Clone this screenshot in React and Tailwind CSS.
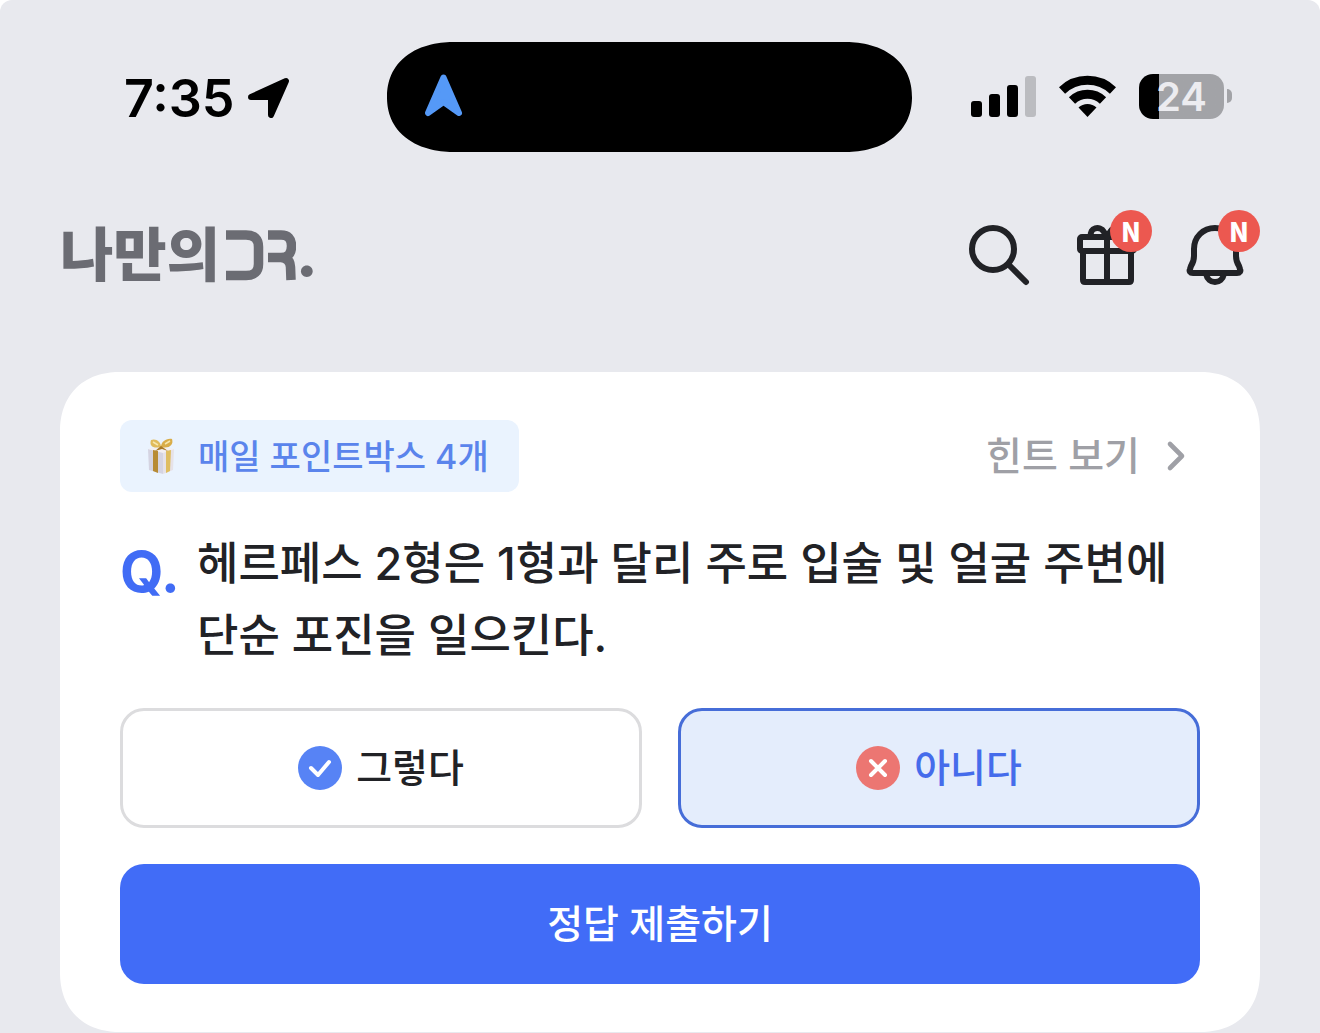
import { useState } from "react";
import { ChevronRight } from "lucide-react";

function StatusBar() {
  return (
    <div className="grid grid-cols-[387px_1fr_408px] items-center">
      <div className="flex items-center gap-3 pt-1 pl-[124px]">
        <span className="text-[52px] leading-[60px] font-semibold text-black">7:35</span>
        <svg width="44" height="44" viewBox="0 0 44 44" aria-hidden="true">
          <path
            d="M4 20L39 4L24 38V20Z"
            fill="black"
            stroke="black"
            strokeWidth="6"
            strokeLinejoin="round"
          />
        </svg>
      </div>

      <div className="flex h-[110px] items-center rounded-[68px/55px] bg-black pl-9 [corner-shape:superellipse(1.15)]">
        <svg width="42" height="46" viewBox="0 0 42 46" aria-hidden="true">
          <path
            d="M20.500 3.500L36 39L20.500 28L5 39Z"
            fill="#5599f7"
            stroke="#5599f7"
            strokeWidth="6"
            strokeLinejoin="round"
          />
        </svg>
      </div>

      <div className="flex items-center justify-end gap-[23px] pr-[88px] pb-0.5">
        <svg width="65" height="42" viewBox="0 0 65 42" aria-hidden="true">
          <rect x="0" y="26" width="11" height="16" rx="3" />
          <rect x="18" y="19" width="11" height="23" rx="3" />
          <rect x="36" y="10" width="11" height="32" rx="3" />
          <rect x="54" y="1" width="11" height="41" rx="3" fill="#bbbcc0" />
        </svg>
        <svg width="57" height="42" viewBox="0 0 57 42" aria-hidden="true">
          <g fill="none" stroke="black" strokeWidth="9">
            <path d="M3 15.500A37 37 0 0 1 54 15.500" />
            <path d="M13 25.500A22.500 22.500 0 0 1 44 25.500" />
          </g>
          <path d="M28.500 42L19.500 32.500A13 13 0 0 1 37.500 32.500Z" />
        </svg>
        <div className="flex items-center gap-[3px]">
          <div className="flex h-[45px] w-[85px] items-center justify-center rounded-[14px] bg-linear-to-r from-black from-[20px] to-[#a2a3a7] to-[20px] text-[40px] leading-[45px] font-semibold text-[#ececf0]">
            24
          </div>
          <div className="h-[14px] w-[5px] rounded-r-full bg-[#a2a3a7]" />
        </div>
      </div>
    </div>
  );
}

function Logo() {
  return (
    <a href="#" className="flex items-center text-[#6b6c73]" aria-label="나만의 DR.">
      <span className="text-[58px] leading-[72px] font-black">나만의</span>
      <svg className="ml-1.5" width="70" height="52" viewBox="0 0 70 52" aria-hidden="true">
        <g fill="none" stroke="currentColor" strokeWidth="9.5">
          <path d="M0 6H20Q32.500 6 32.500 18V35Q32.500 46.500 20 46.500H0" />
          <path d="M42 6H55Q65.500 6 65.500 17Q65.500 28.500 55 28.500H42M55 28.500Q64 29 64.500 38L65 51" />
        </g>
      </svg>
      <span className="text-[58px] leading-[72px] font-black">.</span>
    </a>
  );
}

function IconButton({ label, isNew, children }) {
  return (
    <button type="button" aria-label={label} className="relative size-[72px] text-[#212226]">
      <svg
        className="size-full"
        viewBox="0 0 72 72"
        fill="none"
        stroke="currentColor"
        strokeWidth="6"
        strokeLinecap="round"
        strokeLinejoin="round"
      >
        {children}
      </svg>
      {isNew && (
        <span className="absolute -top-[9px] -right-[9px] flex size-[42px] items-center justify-center rounded-full bg-[#ec5850] font-['Noto_Sans_CJK_KR',sans-serif] text-[26px] leading-none font-black text-white">
          N
        </span>
      )}
    </button>
  );
}

function Header() {
  return (
    <header className="mt-[67px] flex items-center justify-between pr-[69px] pl-[60px]">
      <Logo />
      <div className="flex gap-9">
        <IconButton label="검색">
          <circle cx="30" cy="30" r="21" />
          <path d="M45.500 45.500L63 63" />
        </IconButton>
        <IconButton label="선물" isNew>
          <rect x="9" y="18" width="54" height="14" rx="2" />
          <path d="M12 32V61Q12 63 14 63H58Q60 63 60 61V32M36 18V63" />
          <path d="M20 17C18 9 29 6 33 13L36 17L39 13C43 6 54 9 52 17" />
        </IconButton>
        <IconButton label="알림" isNew>
          <path d="M36 9C24 9 15 18 15 30V37C15 42 14 44 12 47L11 50C10 52 11 54 14 54H58C61 54 62 52 61 50L60 47C58 44 57 42 57 37V30C57 18 48 9 36 9Z" />
          <path d="M27 55C28 60 32 63 36 63S44 60 45 55" />
        </IconButton>
      </div>
    </header>
  );
}

function GiftBox() {
  return (
    <svg width="34" height="40" viewBox="0 0 32 40" aria-hidden="true">
      <path d="M3 13L18 16V38L4 34Z" fill="#d5d4e2" />
      <path d="M18 16L29 13L28 34L18 38Z" fill="#e6e2e8" />
      <path d="M3 13L15 10L29 13L18 17Z" fill="#f3eff1" />
      <path d="M8 14L13 15V37L8 35Z" fill="#b78b35" />
      <path d="M21 15L26 14L25 35L21 37Z" fill="#dfbd60" />
      <path d="M16 11C8 13 4 10 6 4C11 2 16 6 16 11Z" fill="#e0bb5c" />
      <path d="M16 11C24 13 29 9 27 3C21 2 16 6 16 11Z" fill="#d9ad49" />
      <path d="M8 6L13 9M25 5L20 8" stroke="#f7e7ad" strokeWidth="1.5" />
      <path d="M16 10L10 15L17 13L23 15Z" fill="#a97925" />
    </svg>
  );
}

const OPTIONS = [
  { id: "yes", label: "그렇다", color: "#5783f5", mark: "M13 22L20 29L31 16" },
  { id: "no", label: "아니다", color: "#ec7672", mark: "M15 15L29 29M29 15L15 29" },
];

function Quiz() {
  const [answer, setAnswer] = useState("no");

  return (
    <main className="mx-[60px] mt-[81px] flex flex-col gap-9 rounded-[60px] bg-white px-[60px] py-12 [corner-shape:superellipse(1.15)]">
      <div className="flex items-center justify-between">
        <div className="flex h-[72px] items-center gap-5 rounded-xl bg-[#eaf3fe] pr-[30px] pl-6 text-[34px] font-medium text-[#5a84ec]">
          <GiftBox />
          매일 포인트박스 4개
        </div>
        <button type="button" className="flex items-center gap-3 text-[39px] leading-[72px] font-medium text-[#9fa0a6]">
          힌트 보기
          <ChevronRight size={48} strokeWidth={2.3} />
        </button>
      </div>

      <div className="flex">
        <span className="w-[77px] shrink-0 text-[56px] leading-[88px] font-bold text-[#416cf5]">Q.</span>
        <h1 className="text-[45px] leading-[72px] font-medium text-[#212226]">
          헤르페스 2형은 1형과 달리 주로 입술 및 얼굴 주변에 단순 포진을 일으킨다.
        </h1>
      </div>

      <div className="grid grid-cols-2 gap-9">
        {OPTIONS.map((option) => (
          <button
            key={option.id}
            type="button"
            aria-pressed={answer === option.id}
            onClick={() => setAnswer(option.id)}
            className={`flex h-[120px] items-center justify-center gap-[14px] rounded-3xl border-3 text-[39px] font-medium ${
              answer === option.id
                ? "border-[#466dd8] bg-[#e4edfc] text-[#456ceb]"
                : "border-[#dcdcde] bg-white text-[#212226]"
            }`}
          >
            <svg width="44" height="44" viewBox="0 0 44 44" fill="none" aria-hidden="true">
              <circle cx="22" cy="22" r="22" fill={option.color} />
              <path d={option.mark} stroke="white" strokeWidth="4" strokeLinecap="round" strokeLinejoin="round" />
            </svg>
            {option.label}
          </button>
        ))}
      </div>

      <button type="button" className="h-[120px] rounded-3xl bg-[#416cf7] text-[39px] font-medium text-white">
        정답 제출하기
      </button>
    </main>
  );
}

export default function App() {
  return (
    <div className="min-h-screen bg-white">
      <div className="min-h-screen rounded-t-xl bg-[#e8e9ee] pt-[42px] font-['Inter','Noto_Sans_CJK_KR',sans-serif]">
        <StatusBar />
        <Header />
        <Quiz />
      </div>
    </div>
  );
}
